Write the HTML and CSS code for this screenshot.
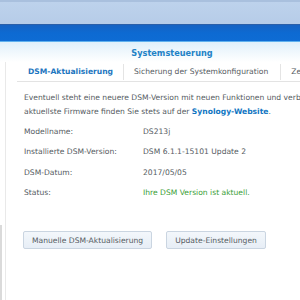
FILE: index.html
```html
<!DOCTYPE html>
<html lang="de">
<head>
<meta charset="utf-8">
<link rel="stylesheet" href="styles.css">
</head>
<body>
<div class="desk"></div>
<div class="band"></div>
<div class="header"><span class="title">Systemsteuerung</span></div>
<div class="main">
  <div class="side"><div class="side-top"></div><div class="side-bottom"></div></div>
  <div class="content">
    <div class="tabs">
      <div class="tab active">DSM-Aktualisierung</div>
      <div class="tab">Sicherung der Systemkonfiguration</div>
      <div class="tab">Zeitplan</div>
    </div>
    <div class="pane">
      <p class="intro">Eventuell steht eine neuere DSM-Version mit neuen Funktionen und verbesserter Sicherheit zur Verfügung. Die<br>aktuellste Firmware finden Sie stets auf der <a class="link">Synology-Website</a>.</p>
      <div class="rows">
        <div class="row"><span class="label">Modellname:</span><span class="value">DS213j</span></div>
        <div class="row"><span class="label">Installierte DSM-Version:</span><span class="value">DSM 6.1.1-15101 Update 2</span></div>
        <div class="row"><span class="label">DSM-Datum:</span><span class="value">2017/05/05</span></div>
        <div class="row"><span class="label">Status:</span><span class="value ok">Ihre DSM Version ist aktuell.</span></div>
      </div>
      <div class="buttons">
        <button class="btn">Manuelle DSM-Aktualisierung</button>
        <button class="btn">Update-Einstellungen</button>
      </div>
    </div>
  </div>
</div>
</body>
</html>
```
FILE: styles.css
```css
html, body {
  margin: 0;
  padding: 0;
  width: 300px;
  height: 300px;
  overflow: hidden;
  background: #ffffff;
  font-family: "DejaVu Sans", Verdana, sans-serif;
  font-size: 7.6px;
  color: #555b62;
}
.desk {
  height: 22px;
  border-top: 2px solid #a9c0de;
  background: linear-gradient(#bdd2ec, #b6cce8);
}
.band {
  height: 16px;
  border-top: 1px solid #2b5fa8;
  background: linear-gradient(#1662c2, #0d6ad2 50%, #0e6cd4);
  border-bottom: 1px solid #5fb1ee;
}
.header {
  height: 20px;
  background: linear-gradient(#dff0fb, #f3f9fd 60%, #ffffff);
  display: flex;
  justify-content: center;
  align-items: center;
  padding-left: 44px;
  padding-top: 1px;
  box-sizing: border-box;
}
.title {
  font-weight: bold;
  font-size: 8.2px;
  color: #2382c6;
}
.main {
  display: flex;
  height: 238px;
}
.side {
  flex: none;
  width: 5px;
  border-right: 1px solid #e9e9e9;
  display: flex;
  flex-direction: column;
}
.side-top { height: 163px; }
.side-bottom {
  flex: 1;
  width: 2px;
  background: #dadada;
}
.content {
  flex: 1;
  min-width: 0;
  overflow: hidden;
}
.tabs {
  margin-left: 11px;
  height: 19px;
  border-bottom: 1px solid #e3e3e3;
  display: flex;
  align-items: center;
  white-space: nowrap;
}
.tab {
  flex: none;
  padding: 0 12px 0 10px;
  line-height: 16px;
  border-left: 1px solid #e4e4e4;
  color: #555b62;
}
.tab.active {
  border-left: none;
  padding-left: 11px;
  padding-right: 10px;
  font-weight: bold;
  color: #1d76c0;
}
.pane {
  padding: 9px 0 0 18px;
}
.intro {
  margin: 0;
  line-height: 13.5px;
  white-space: nowrap;
}
.link {
  font-weight: bold;
  color: #0f75c2;
}
.rows {
  margin-top: 4px;
}
.row {
  display: flex;
  line-height: 20.3px;
  white-space: nowrap;
}
.label { width: 119px; flex: none; }
.ok { color: #3a9e36; }
.buttons {
  margin-top: 28px;
  display: flex;
  gap: 14px;
  margin-left: -1px;
}
.btn {
  font-family: inherit;
  font-size: 7.6px;
  color: #555b62;
  height: 18px;
  padding: 0 8px;
  border: 1px solid #cad5e1;
  border-radius: 2px;
  background: linear-gradient(#f3f7fb, #e7eef6);
}
```
